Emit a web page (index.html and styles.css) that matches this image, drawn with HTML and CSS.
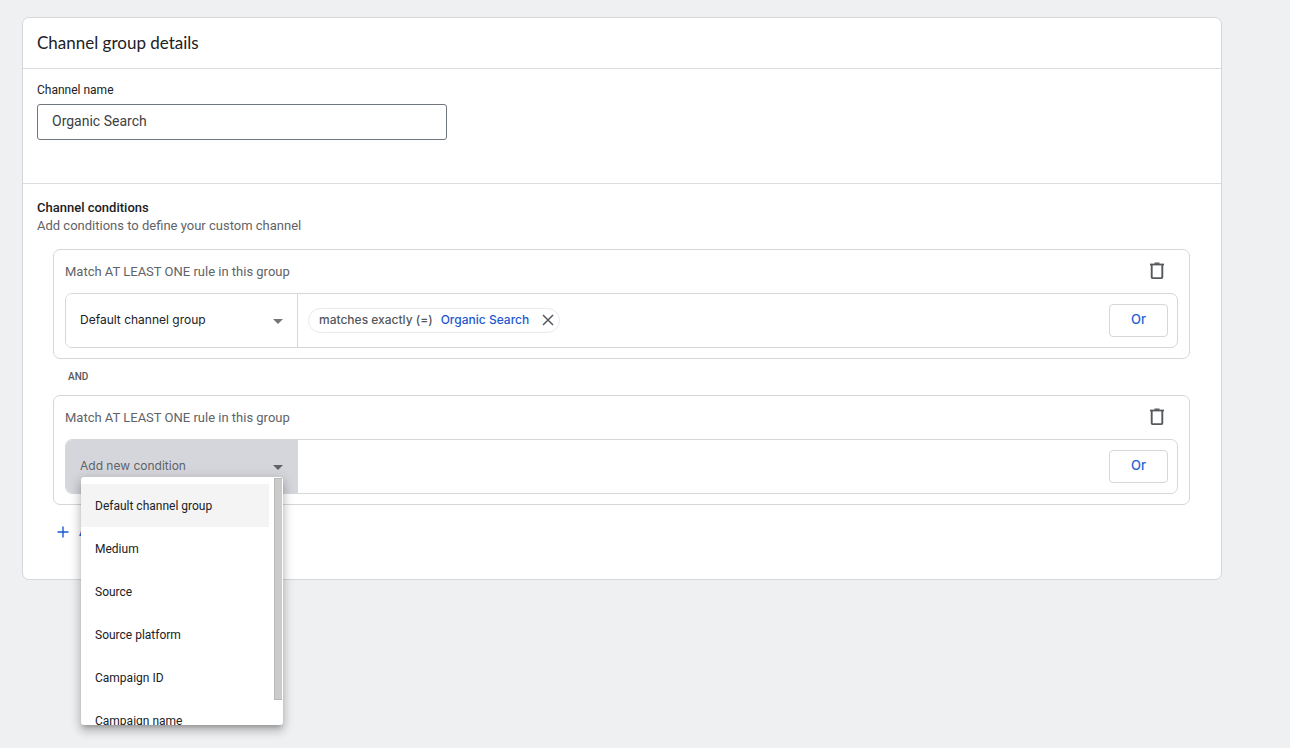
FILE: index.html
```html
<!DOCTYPE html>
<html lang="en">
<head>
<meta charset="utf-8">
<meta name="viewport" content="width=device-width, initial-scale=1">
<title>Channel group details</title>
<link rel="stylesheet" href="styles.css">
</head>
<body>
<main class="card">
  <header class="card-header"><h1>Channel group details</h1></header>
  <section class="name-section">
    <label for="channel-name">Channel name</label>
    <input id="channel-name" class="name-input" type="text" value="Organic Search">
  </section>
  <section class="conditions">
    <h2>Channel conditions</h2>
    <p class="hint">Add conditions to define your custom channel</p>
    <div class="groups">
      <div class="group">
        <div class="group-head">
          <span>Match AT LEAST ONE rule in this group</span>
          <button class="icon-button" type="button" aria-label="Delete group">
            <svg width="16" height="18" viewBox="0 0 16 18" fill="none" stroke="#55585c"><path d="M1 2.500h14" stroke-width="1.800"/><path d="M5.500 1.200h5" stroke-width="1.400"/><path d="M2.700 3v12.300q0 .8.8.8h9q.8 0 .8-.8V3" stroke-width="1.900"/></svg>
          </button>
        </div>
        <div class="rule">
          <div class="picker">
            <select aria-label="Condition 1"><option>Default channel group</option></select>
            <svg class="arrow" width="10" height="5" viewBox="0 0 10 5" fill="#757575"><path d="M0 0h10L5 5z"/></svg>
          </div>
          <div class="rule-body">
            <div class="chip">
              <span>matches exactly (=)</span>
              <a href="#">Organic Search</a>
              <button class="icon-button" type="button" aria-label="Remove rule">
                <svg width="12" height="12" viewBox="0 0 12 12" fill="none" stroke="#55585c" stroke-width="1.500"><path d="M1 1l10 10M11 1L1 11"/></svg>
              </button>
            </div>
            <button class="or" type="button">Or</button>
          </div>
        </div>
      </div>
      <div class="and">AND</div>
      <div class="group">
        <div class="group-head">
          <span>Match AT LEAST ONE rule in this group</span>
          <button class="icon-button" type="button" aria-label="Delete group">
            <svg width="16" height="18" viewBox="0 0 16 18" fill="none" stroke="#55585c"><path d="M1 2.500h14" stroke-width="1.800"/><path d="M5.500 1.200h5" stroke-width="1.400"/><path d="M2.700 3v12.300q0 .8.8.8h9q.8 0 .8-.8V3" stroke-width="1.900"/></svg>
          </button>
        </div>
        <div class="rule">
          <div class="picker picker-open">
            <select aria-label="Condition 2"><option>Add new condition</option></select>
            <svg class="arrow" width="10" height="5" viewBox="0 0 10 5" fill="#5f6368"><path d="M0 0h10L5 5z"/></svg>
            <div class="menu">
              <ul role="listbox" aria-label="Conditions">
                <li role="option" aria-selected="true" class="active">Default channel group</li>
                <li role="option">Medium</li>
                <li role="option">Source</li>
                <li role="option">Source platform</li>
                <li role="option">Campaign ID</li>
                <li role="option">Campaign name</li>
              </ul>
              <div class="scroll"><div class="thumb"></div></div>
            </div>
          </div>
          <div class="rule-body">
            <button class="or" type="button">Or</button>
          </div>
        </div>
      </div>
      <button class="add" type="button">
        <svg width="12" height="12" viewBox="0 0 12 12" fill="none" stroke="#1a5bd0" stroke-width="1.400"><path d="M6 .5v11M.5 6h11"/></svg>
        <span>Add condition group</span>
      </button>
    </div>
  </section>
</main>
</body>
</html>
```
FILE: styles.css
```css
* { box-sizing: border-box; }
body {
  min-height: 100vh;
  margin: 0;
  padding: 17px 68px 17px 22px;
  background: #eff0f2;
  color: #202124;
  font-family: Roboto, sans-serif;
  font-size: 13px;
  line-height: 18px;
}
button, input, select { font-family: inherit; margin: 0; }
h1, h2, p, ul { margin: 0; padding: 0; }
.card {
  background: #fff;
  border: 1px solid #d5d7db;
  border-radius: 7px;
}
.card-header {
  padding: 13px 14px;
  border-bottom: 1px solid #dcdde0;
}
h1 {
  font-family: Lato, sans-serif;
  font-size: 17px;
  font-weight: 400;
  line-height: 24px;
}
.name-section {
  display: flex;
  flex-direction: column;
  align-items: flex-start;
  gap: 5px;
  padding: 12px 14px 43px;
  border-bottom: 1px solid #dcdde0;
}
.name-section label { font-size: 12px; }
.name-input {
  width: 410px;
  max-width: 100%;
  height: 36px;
  padding: 0 14px 2px;
  border: 1px solid #6f767d;
  border-radius: 3px;
  background: #fff;
  color: #3c4043;
  font-size: 14px;
}
.conditions { padding: 15px 14px 36px; }
h2 { font-size: 13px; font-weight: 500; line-height: 18px; }
.hint { color: #5f6368; }
.groups { padding: 14px 17px 0 16px; }
.group {
  padding: 0 11px 10px;
  border: 1px solid #d5d7db;
  border-radius: 7px;
}
.group-head {
  display: flex;
  align-items: center;
  justify-content: space-between;
  height: 43px;
  padding-right: 13px;
  color: #5f6368;
}
.icon-button {
  display: flex;
  padding: 0;
  border: 0;
  background: none;
  cursor: pointer;
}
.group-head .icon-button { padding-bottom: 2px; }
.rule {
  display: flex;
  height: 55px;
  border: 1px solid #d5d7db;
  border-radius: 7px;
}
.picker {
  position: relative;
  flex: none;
  width: 232px;
  border-right: 1px solid #d5d7db;
}
.picker select {
  appearance: none;
  width: 100%;
  height: 100%;
  padding: 0 32px 2px 14px;
  border: 0;
  border-radius: 6px 0 0 6px;
  background: #fff;
  color: #202124;
  font-family: Inter, sans-serif;
  font-size: 12px;
}
.arrow {
  position: absolute;
  top: 25px;
  right: 14px;
  pointer-events: none;
}
.picker-open select { background: #d5d6db; color: #5f6368; }
.rule-body {
  display: flex;
  flex: 1;
  align-items: center;
  padding: 0 9px 0 10px;
}
.chip {
  display: flex;
  align-items: center;
  gap: 8px;
  height: 25px;
  padding: 0 5px 2px 10px;
  border: 1px solid #e8eaed;
  border-radius: 13px;
  color: #55585c;
  font-family: Inter, sans-serif;
  font-size: 12px;
  font-weight: 500;
}
.chip a { color: #1f57cf; text-decoration: none; }
.chip .icon-button { padding: 1px 0 0 5px; }
.or {
  width: 59px;
  height: 33px;
  margin-left: auto;
  padding: 0 0 3px;
  border: 1px solid #d5d7db;
  border-radius: 4px;
  background: #fff;
  color: #1a62d6;
  font-family: Inter, sans-serif;
  font-size: 13px;
  font-weight: 500;
}
.and {
  padding: 9px 15px;
  color: #55585c;
  font-size: 10px;
  font-weight: 500;
}
.add {
  display: flex;
  align-items: center;
  gap: 10px;
  margin-top: 17px;
  margin-bottom: 1px;
  padding: 0 4px;
  border: 0;
  background: none;
  color: #1a5bd0;
  font-size: 13px;
  font-weight: 500;
  line-height: 20px;
}
.menu {
  position: absolute;
  z-index: 2;
  top: 37px;
  left: 15px;
  display: flex;
  width: 202px;
  height: 248px;
  overflow: hidden;
  background: #fff;
  border-radius: 3px;
  box-shadow: 0 4px 4px -2px rgba(0, 0, 0, .2), 0 6px 8px 1px rgba(0, 0, 0, .14), 0 2px 12px 2px rgba(0, 0, 0, .12);
}
.menu ul {
  flex: 1;
  padding: 7px 5px 0 0;
  list-style: none;
  color: #202124;
  font-size: 12px;
}
.menu li { padding: 1px 14px 0; line-height: 42px; }
.menu .active { background: #f4f4f4; }
.scroll { width: 9px; padding: 1px 1px 0 0; }
.thumb {
  height: 222px;
  border: 1px solid #b8b8b8;
  border-right: 0;
  background: #cbcbcb;
}
```
